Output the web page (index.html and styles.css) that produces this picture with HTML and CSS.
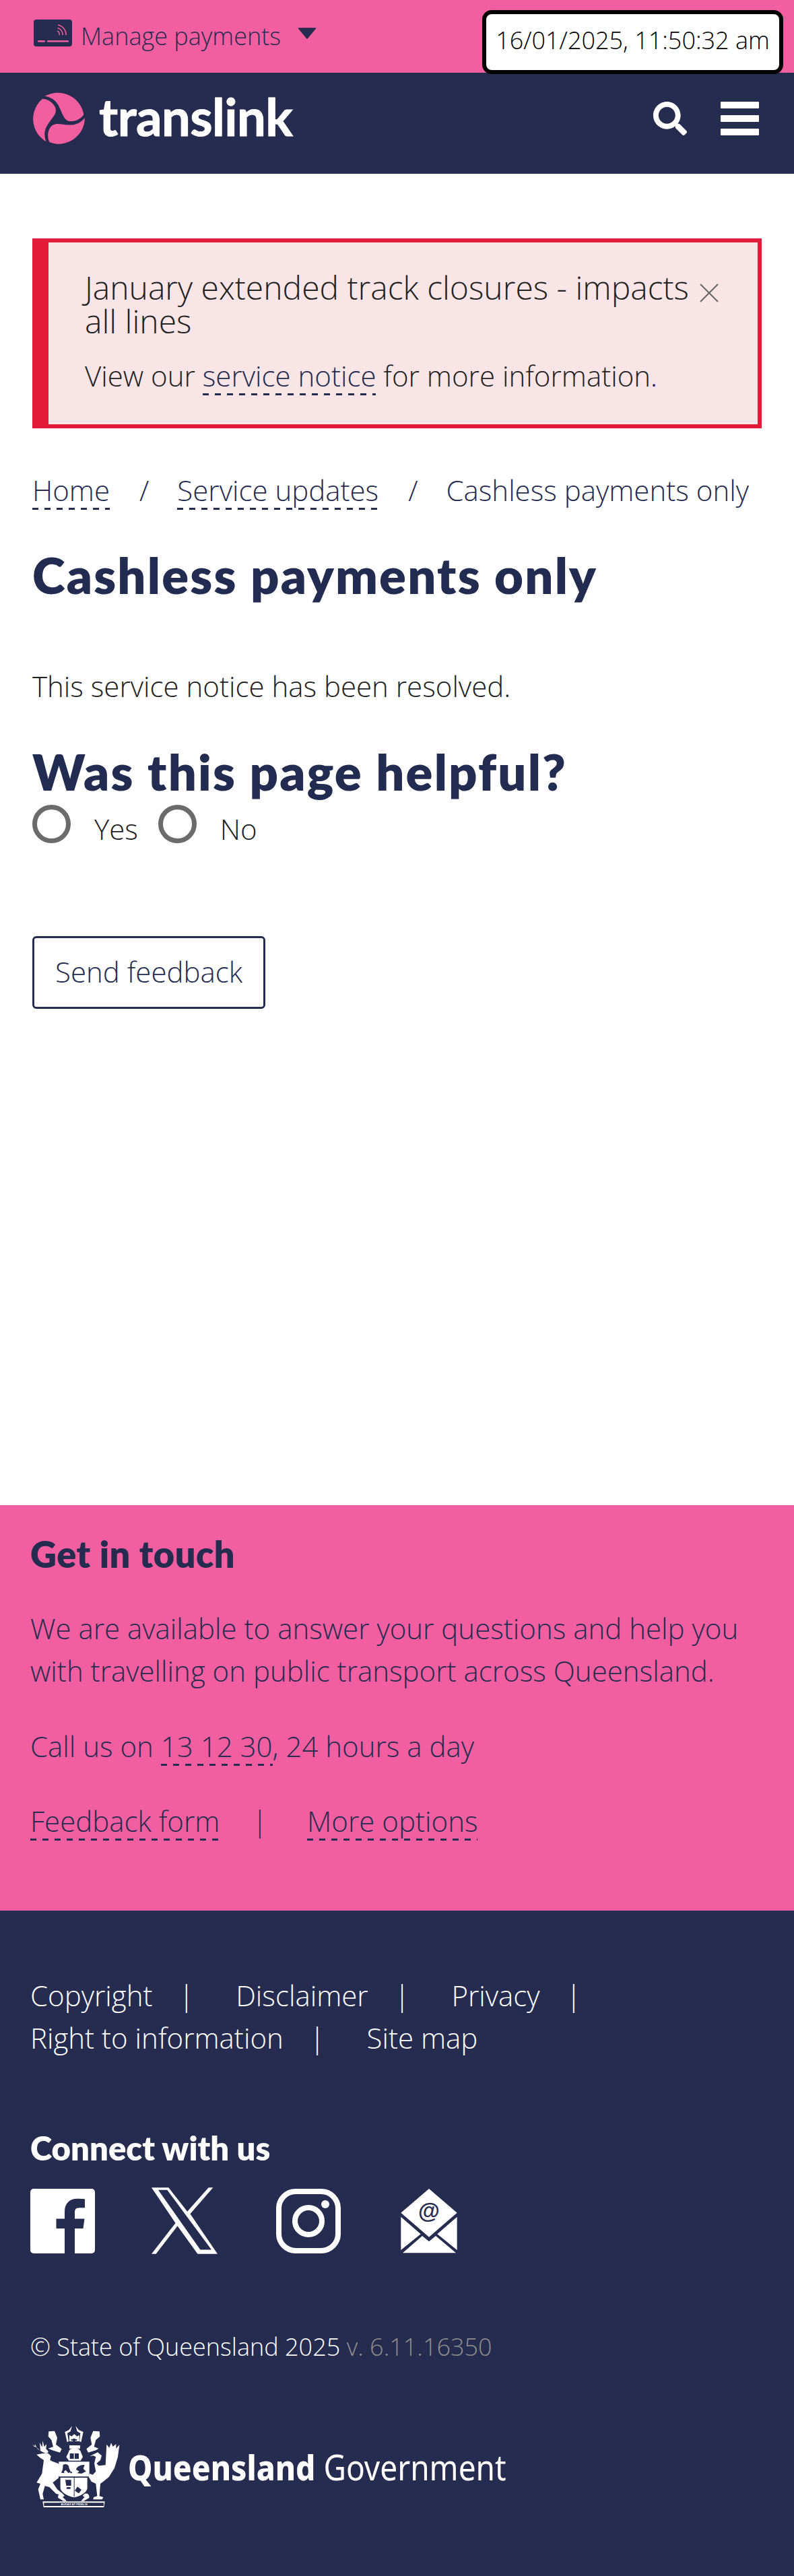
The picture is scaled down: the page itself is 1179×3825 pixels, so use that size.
FILE: index.html
```html
<!DOCTYPE html>
<html lang="en">
<head>
<meta charset="utf-8">
<title>Cashless payments only</title>
<link rel="stylesheet" href="styles.css">
</head>
<body>
<div class="topbar">
  <a class="manage">
    <svg class="card" viewBox="0 0 57 40"><rect width="57" height="40" rx="4" fill="#262c4f"/><g fill="none" stroke="#f15fa0" stroke-width="1.6"><path d="M35 17a5 5 0 0 1 3 6"/><path d="M35.500 12.500a10 10 0 0 1 7.500 10.500"/><path d="M36 8a15 15 0 0 1 12 15"/></g><rect x="6" y="31" width="11" height="2.500" rx="1" fill="#f15fa0"/><rect x="20" y="31" width="32" height="2.500" rx="1" fill="#f15fa0"/></svg>
    <span class="manage-label">Manage payments</span>
    <svg class="caret" viewBox="0 0 28 17"><path d="M1.500 1h25L14 16z" fill="#262c4f" stroke="#262c4f" stroke-width="1.500" stroke-linejoin="round"/></svg>
  </a>
  <div class="stamp">16/01/2025, 11:50:32 am</div>
</div>
<header class="masthead">
  <a class="brand">
    <svg class="mark" viewBox="-115 -115 230 230">
      <g fill="#f15fa0">
        <path d="M-60-98A115 115 0 0 1 110-18C100-2 80 12 55 12 25 12 18-18 8-40-2-62-15-90-60-98Z"/>
        <path d="M-60-98A115 115 0 0 1 110-18C100-2 80 12 55 12 25 12 18-18 8-40-2-62-15-90-60-98Z" transform="rotate(120)"/>
        <path d="M-60-98A115 115 0 0 1 110-18C100-2 80 12 55 12 25 12 18-18 8-40-2-62-15-90-60-98Z" transform="rotate(240)"/>
      </g>
    </svg>
    <span class="wordmark">translink</span>
  </a>
  <div class="tools">
    <svg class="search" viewBox="0 0 512 512"><path fill="#fff" d="M505 442.700L405.300 343c-4.500-4.500-10.600-7-17-7H372c27.600-35.300 44-79.700 44-128C416 93.100 322.900 0 208 0S0 93.100 0 208s93.100 208 208 208c48.300 0 92.700-16.400 128-44v16.300c0 6.400 2.500 12.500 7 17l99.700 99.700c9.400 9.400 24.600 9.400 33.900 0l28.300-28.300c9.400-9.400 9.400-24.600.1-34zM208 336c-70.700 0-128-57.200-128-128 0-70.700 57.200-128 128-128 70.700 0 128 57.200 128 128 0 70.700-57.200 128-128 128z"/></svg>
    <div class="burger"><span></span><span></span><span></span></div>
  </div>
</header>
<main class="content">
  <section class="alert">
    <div class="alert-head">
      <h4 class="alert-title">January extended track closures - impacts all lines</h4>
      <svg class="close" viewBox="0 0 28 28"><path d="M1 1l26 26M27 1L1 27" stroke="#666" stroke-width="2" fill="none"/></svg>
    </div>
    <p class="alert-body">View our <a class="dash">service notice</a> for more information.</p>
  </section>
  <nav class="crumbs"><a class="dash">Home</a><span class="slash">/</span><a class="dash">Service updates</a><span class="slash">/</span><span>Cashless payments only</span></nav>
  <h1 class="title">Cashless payments only</h1>
  <p class="resolved">This service notice has been resolved.</p>
  <h2 class="helpful">Was this page helpful?</h2>
  <div class="choices">
    <span class="radio"></span><span class="choice">Yes</span>
    <span class="radio"></span><span class="choice">No</span>
  </div>
  <a class="send">Send feedback</a>
</main>
<section class="touch">
  <h3 class="touch-title">Get in touch</h3>
  <p class="touch-copy">We are available to answer your questions and help you with travelling on public transport across Queensland.</p>
  <p class="touch-call">Call us on <a class="dash">13 12 30</a>, 24 hours a day</p>
  <p class="touch-links"><a class="dash">Feedback form</a><span class="sep-pink">|</span><a class="dash">More options</a></p>
</section>
<footer class="foot">
  <nav class="legal">
    <span class="legal-item"><a>Copyright</a><span class="sep">|</span></span>
    <span class="legal-item"><a>Disclaimer</a><span class="sep">|</span></span>
    <span class="legal-item"><a>Privacy</a><span class="sep">|</span></span>
    <span class="legal-item"><a>Right to information</a><span class="sep">|</span></span>
    <span class="legal-item"><a>Site map</a></span>
  </nav>
  <h3 class="connect">Connect with us</h3>
  <div class="socials">
    <svg class="fb" viewBox="0 0 96 96"><rect width="96" height="96" rx="5" fill="#fff"/><path fill="#262c4f" d="M66 96V59h12.500l2-14.500H66v-9.200c0-4.200 1.200-7 7.200-7H81V15.400C79.600 15.200 75 14.800 69.600 14.800 58.500 14.800 51 21.500 51 34v10.500H38.500V59H51v37z"/></svg>
    <svg class="xlogo" viewBox="30 25 295 297"><path fill="#fff" fill-rule="evenodd" d="M30 25H106L190 132 285 25H305L203 143 325 322H236L146 197 50 322H30L137 184ZM60 36L248 303H298L100 36Z"/></svg>
    <svg class="insta" viewBox="0 0 96 96"><rect x="4" y="4" width="88" height="88" rx="25" fill="none" stroke="#fff" stroke-width="8"/><circle cx="48" cy="48" r="20" fill="none" stroke="#fff" stroke-width="8"/><circle cx="73" cy="23" r="6" fill="#fff"/></svg>
    <svg class="mail" viewBox="30 30 250 288"><path fill="#fff" d="M155 30L280 137 155 245 30 137Z"/><path fill="#fff" d="M30 155L118 232 30 303ZM280 155L192 232 280 303ZM38 316L125 240 155 265 185 240 275 316Z"/><text class="at" x="155" y="161" text-anchor="middle">@</text></svg>
  </div>
  <p class="copyright">© State of Queensland 2025 <span class="version">v. 6.11.16350</span></p>
  <div class="qld">
    <svg class="arms" viewBox="85 37 392 363">
      <g fill="#fff">
        <path d="M88 120L100 132 100 118 112 140 125 148 122 112 133 132 135 104 142 130 152 118 150 140 160 150 158 158 148 160 128 150 110 135Z"/>
        <path d="M108 165L135 160 160 160 172 172 168 190 178 195 205 205 215 225 205 270 180 290 200 320 225 340 220 345 195 340 165 310 145 305 135 340 140 365 125 365 115 320 125 295 108 290 132 250 140 190 125 180Z"/>
        <path d="M345 172L380 155 398 170 392 190 375 205 385 215 415 212 420 120 432 135 440 113 448 130 462 118 462 138 477 122 470 175 455 225 430 265 405 285 392 295 388 350 405 355 400 365 360 365 362 355 378 350 372 295 352 285 340 265 345 250 358 255 372 240 365 205 372 175 360 170Z"/>
        <path d="M207 197h136v66H207z"/>
        <path d="M214 268h120v44c0 22-30 38-59 44-29-6-61-22-61-44z"/>
        <path d="M250 156c4-28 50-28 56 0l8 20-10 16h-52l-12-16z"/>
        <path d="M254 124h48v14h-48zM264 84l12-10 12 10 10-6v28h-44V78z"/>
        <path d="M266 38l-14 18-18 8 10 46 7-4-6-36 14-8zM282 38l14 18 20 8-10 46-7-4 4-36-14-8z"/>
        <path d="M162 62l26-2 12 30-6 30 26 20-8 16-34-10-18-8 22-8-8-30-14-16zM388 62l-28-2-12 30 6 30-24 20 8 16 34-10 12-8-20-8 8-30 18-16z"/>
        <path d="M135 374h277l-4 26H139zM204 358c-4-22 22-26 28-8l-8 4 18 18h-14l-20-12zM342 358c4-22-22-26-28-8l8 4-16 18h12l20-12z"/>
      </g>
      <g fill="#262c4f">
        <path d="M226 210c12-6 28 0 26 14l8 18-10 6-12-14-8 6 2 8-14-2 6-14zM284 232c2-14 26-24 38-20l-6 16 12 12-20 10-20-2 10-8zM258 242h8v6h-8z"/>
        <path d="M274 263h3v90h-3zM236 278h26v26h-22zM243 310h16v8h-18zM290 308l18 14-12 16-18-12z"/>
        <path d="M256 160h18v24h-18zM278 160h18v24h-18z"/>
        <path d="M141 380h266v14H141z"/>
        <path d="M270 94h10v14h-10zM262 97h26v6h-26z"/>
      </g>
      <text class="motto" x="275" y="392" text-anchor="middle">AUDAX AT FIDELIS</text>
    </svg>
    <span class="qld-name"><b class="qld-bold">Queensland</b> Government</span>
  </div>
</footer>
</body>
</html>
```
FILE: styles.css
```css
* { box-sizing: border-box; }
html, body { margin: 0; padding: 0; }
body {
  font-family: "Open Sans", "Noto Sans", sans-serif;
  font-weight: 300;
  font-size: 42px;
  line-height: 63px;
  color: #222;
  background: #fff;
}
h1, h2, h3, h4, p { margin: 0; }

.topbar {
  position: relative;
  height: 108px;
  background: #f15fa0;
  display: flex;
  align-items: flex-start;
  padding: 29px 0 0 50px;
}
.manage { display: flex; align-items: flex-start; color: #262c4f; }
.card { width: 57px; height: 40px; flex: none; }
.manage-label { font-size: 36px; line-height: 50px; margin-left: 13px; }
.caret { width: 28px; height: 17px; margin: 12px 0 0 25px; }
.stamp {
  position: absolute;
  top: 15px;
  left: 716px;
  width: 447px;
  height: 95px;
  border: 6px solid #000;
  border-radius: 14px;
  background: #fff;
  color: #000;
  font-size: 36px;
  line-height: 78px;
  text-align: center;
  white-space: nowrap;
}

.masthead {
  height: 150px;
  background: #262c4f;
  display: flex;
  justify-content: space-between;
  align-items: center;
  padding: 0 52px 14px 48px;
}
.brand { display: flex; align-items: center; }
.mark { width: 78px; height: 78px; flex: none; }
.wordmark {
  font-family: Lato, sans-serif;
  font-weight: 700;
  font-size: 76px;
  line-height: 78px;
  color: #fff;
  margin-left: 21px;
  letter-spacing: -0.6px;
  -webkit-text-stroke: 1px #fff;
  padding-bottom: 6px;
}
.tools { display: flex; align-items: center; gap: 50px; }
.search { width: 50px; height: 50px; }
.burger { display: flex; flex-direction: column; gap: 10px; }
.burger span { display: block; width: 57px; height: 10px; border-radius: 1px; background: #fff; }

.content { padding: 96px 0 737px 48px; }
.alert {
  width: 1083px;
  height: 282px;
  background: #f9e5e5;
  border: 6px solid #e31b3b;
  border-left-width: 24px;
  padding: 42px 0 0 54px;
}
.alert-head { display: flex; align-items: flex-start; }
.alert-title { width: 913px; font-weight: 300; font-size: 48px; line-height: 50px; flex: none; }
.close { width: 28px; height: 28px; margin-top: 19px; flex: none; }
.alert-body { margin-top: 24px; }

.dash {
  color: #262c4f;
  padding-bottom: 1px;
  background-image: linear-gradient(90deg, #262c4f 50%, transparent 50%);
  background-size: 18px 3px;
  background-repeat: repeat-x;
  background-position: left bottom;
}

.crumbs { margin-top: 60px; color: #262c4f; white-space: nowrap; }
.slash { margin: 0 42px 0 44px; }
.title, .helpful {
  font-family: Lato, sans-serif;
  font-weight: 800;
  font-size: 74px;
  letter-spacing: 2.2px;
  line-height: 86px;
  color: #222b50;
}
.title { margin-top: 52px; }
.resolved { margin-top: 90px; }
.helpful { margin-top: 53px; }
.choices { display: flex; margin-top: 6px; height: 57px; }
.radio { width: 57px; height: 57px; border: 7px solid #6b6b6b; border-radius: 50%; flex: none; }
.choice { margin: 4px 30px 0 35px; }
.send {
  display: flex;
  align-items: center;
  justify-content: center;
  width: 346px;
  height: 108px;
  margin-top: 138px;
  padding-bottom: 3px;
  border: 3px solid #262c4f;
  border-radius: 6px;
  color: #262c4f;
  font-size: 42px;
}

.touch { background: #f15fa0; color: #262c4f; padding: 38px 0 102px 45px; }
.touch-title { font-family: Lato, sans-serif; font-weight: 800; font-size: 54px; letter-spacing: 0.5px; line-height: 70px; }
.touch-copy { margin-top: 43px; width: 1100px; }
.touch-call { margin-top: 49px; }
.touch-links { margin-top: 48px; }
.sep-pink { margin: 0 59px 0 48px; }

.foot { background: #262c4f; color: #fff; padding: 94px 0 102px 45px; }
.legal { display: flex; flex-wrap: wrap; width: 1120px; }
.sep { margin: 0 62px 0 39px; }
.connect { margin-top: 99px; font-family: Lato, sans-serif; font-weight: 800; font-size: 49px; line-height: 66px; }
.socials { display: flex; margin-top: 28px; height: 96px; }
.fb { width: 96px; height: 96px; }
.xlogo { width: 98px; height: 99px; margin: -2px 0 0 84px; }
.insta { width: 96px; height: 96px; margin-left: 87px; }
.mail { width: 84px; height: 96px; margin-left: 89px; }
.at { font-family: "Liberation Sans", sans-serif; font-weight: 700; font-size: 98px; fill: #262c4f; }
.copyright { margin-top: 107px; font-size: 36px; }
.version { color: #8e8e8e; }
.qld { display: flex; align-items: center; margin-top: 86px; height: 121px; }
.arms { width: 132px; height: 121px; margin-left: 1px; flex: none; }
.motto { font-family: "Liberation Sans", sans-serif; font-weight: 700; font-size: 13px; fill: #fff; }
.qld-name { display: inline-block; font-family: "Noto Sans", sans-serif; font-weight: 400; font-size: 52px; line-height: 60px; margin-left: 12px; white-space: nowrap; transform: scaleX(0.885); transform-origin: left center; }
.qld-bold { font-weight: 800; }
```
